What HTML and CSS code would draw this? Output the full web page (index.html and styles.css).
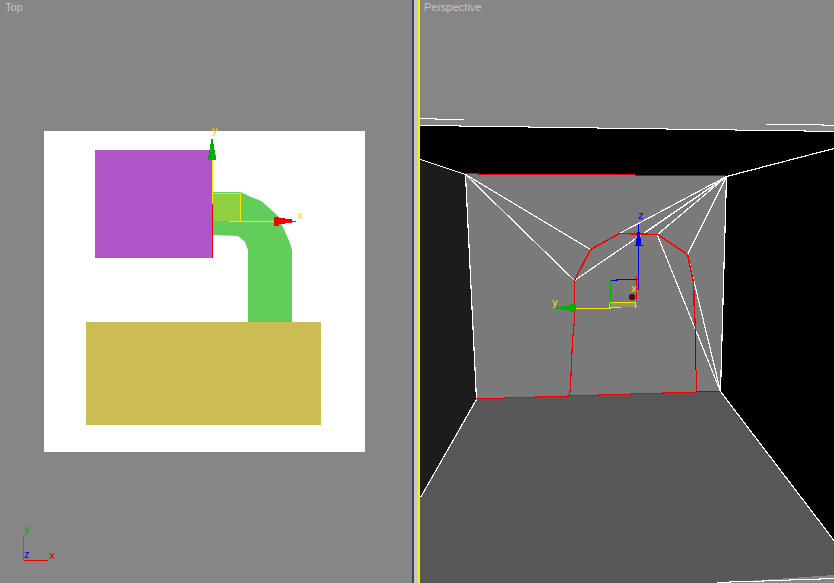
FILE: index.html
```html
<!DOCTYPE html>
<html lang="en">
<head>
<meta charset="utf-8">
<title>Viewports</title>
<link rel="stylesheet" href="styles.css">
</head>
<body>
<main class="workspace">
  <section class="viewport viewport-top">
    <svg class="canvas" viewBox="0 0 412 583" width="412" height="583">
      <text class="label" x="5" y="11">Top</text>
      <rect class="sheet" x="44" y="131" width="321" height="321"/>
      <path class="smooth pipe" d="M212 192H240L262 201.500 278 216 290 243 292 250V322H248V250L245 242 238 236 212 235Z"/>
      <rect class="smooth plane" x="212" y="193" width="28" height="28"/>
      <rect class="purple" x="95" y="150" width="117" height="108"/>
      <rect class="gold" x="86" y="322" width="235" height="103"/>
      <path class="ln yellow" d="M212 193.500H240.500V221M229 221.500H275M212.500 160V204"/>
      <path class="ln red" d="M212.500 204V258"/>
      <path class="fill-red" d="M274 217H279V218H285V219H292V220.500H296V222H292V223H285V224H279V225.500H274Z"/>
      <path class="fill-green" d="M211 139H213V144H214V150H215V155H216V160H208V155H209V150H210V144H211Z"/>
      <text class="axis yellow-text" x="212" y="134">y</text>
      <text class="axis yellow-text" x="297" y="219">x</text>
      <path class="ln red" d="M24 560.500H48"/>
      <path class="ln green-line" d="M23.500 536V560"/>
      <text class="axis red-text" x="49" y="559">x</text>
      <text class="axis green-text" x="24" y="533">y</text>
      <text class="axis blue-text" x="24" y="558">z</text>
    </svg>
  </section>
  <div class="divider"></div>
  <section class="viewport viewport-persp">
    <svg class="canvas" viewBox="420 0 414 583" width="414" height="583">
      <text class="label" x="424" y="11">Perspective</text>
      <path class="room-black" d="M420 125L834 132V148L726 176 465 174 420 159Z"/>
      <path class="room-black" d="M726 176L834 148V540L720 391Z"/>
      <path class="room-left" d="M420 159L465 174 476 399 420 497Z"/>
      <path class="room-back" d="M465 174L726 176 720 391 476 399Z"/>
      <path class="room-floor" d="M476 399L720 391 834 540V575L717 583H420V497Z"/>
      <path class="ln white" d="M420 118.500H436V119.500H464"/>
      <path class="ln white" d="M766 124.500H823V125.500H834"/>
      <path class="ln white" d="M420 125.500H460V126.500H529V127.500H598V128.500H667V129.500H736V130.500H805V131.500H834"/>
      <path class="ln white" d="M420.500 159.500L465.500 174.500M726.500 176.500L834 148.500M476.500 399.500L420.500 497.500M720.500 391.500L834 540.500"/>
      <path class="ln white" d="M717 582.500H730V581.500H763V580.500H790V579.500H820V578.500H834"/>
      <path class="ln white wall-edge" d="M465.500 174.500L476.500 399.500M726.500 176.500L720.500 391.500"/>
      <path class="ln white" d="M465.500 174.500L574.500 280.500M465.500 174.500L590.500 249.500M726.500 176.500L574.500 280.500M726.500 176.500L619.500 233.500M726.500 176.500L642.500 234.500M726.500 176.500L657.500 234.500M726.500 176.500L687.500 254.500M657.500 235.500L720.500 391.500M687.500 254.500L720.500 391.500"/>
      <path class="ln red" d="M465 173.500H478V174.500H635"/>
      <path class="ln dark-red" d="M635 175.500H726"/>
      <path class="ln red thick" d="M574.500 280.500L590.500 249.500 619.500 233.500 657.500 234.500 687.500 254.500 693.500 282.500 694.500 313.500 695.500 330.500"/>
      <path class="ln red" d="M574.500 280V320L572.500 340 570.500 387 569.500 396"/>
      <path class="ln red" d="M696.500 370V392"/>
      <path class="ln dark-line" d="M695.500 330V370"/>
      <path class="ln red" d="M476 398.500H505V397.500H536V396.500H568V395.500H599V394.500H631V393.500H663V392.500H696"/>
      <path class="ln dark-red" d="M696 391.500H720"/>
      <path class="olive" d="M610 303H635L638 307H610Z"/>
      <path class="ln blue" d="M638.500 240V290M611 280.500H617V279.500H638"/>
      <path class="ln green-line" d="M610.500 280V307"/>
      <path class="ln yellow" d="M576 308.500H610V307.500H621M609.500 303V307M610 302.500H635M635.500 302V308"/>
      <path class="ln red" d="M636.500 276V300"/>
      <circle class="dot" cx="632" cy="297" r="3"/>
      <path class="fill-blue" d="M638 224H639V232H640V238H641V245H643V246H635V245H636V238H637V232H638Z"/>
      <path class="fill-green" d="M555 307H562V306H570V304H576V312H570V310H562V309H555Z"/>
      <text class="axis blue-text" x="638" y="219">z</text>
      <text class="axis yellow-text" x="631" y="292">x</text>
      <text class="axis yellow-text" x="552" y="306">y</text>
    </svg>
  </section>
</main>
</body>
</html>
```
FILE: styles.css
```css
html, body {
  margin: 0;
  padding: 0;
  height: 100%;
  overflow: hidden;
  background: #868686;
}
.workspace {
  display: flex;
  width: 834px;
  height: 583px;
}
.viewport {
  height: 583px;
  background: #868686;
}
.viewport-top { width: 412px; flex: none; }
.viewport-persp { flex: 1; min-width: 0; }
.divider {
  width: 8px;
  flex: none;
  box-sizing: border-box;
  background: #c8c8c8;
  border-left: 2px solid #3c4658;
  border-right: 2px solid #fff000;
}
.canvas { display: block; shape-rendering: crispEdges; }
.smooth { shape-rendering: geometricPrecision; }
.label {
  font-family: "Liberation Sans", Arial, sans-serif;
  font-size: 11px;
  fill: #c4c4c4;
}
.axis {
  font-family: "DejaVu Sans", sans-serif;
  font-size: 10px;
  font-weight: 400;
}
.sheet { fill: #fff; }
.pipe { fill: #62cd58; }
.plane { fill: #8ed040; }
.purple { fill: #b055c8; }
.gold { fill: #cbbd54; }
.ln { fill: none; stroke-width: 1.2; }
.thick { stroke-width: 1.5; }
.yellow { stroke: #f5e600; }
.red { stroke: #f00000; }
.dark-red { stroke: #b00000; }
.dark-line { stroke: #501818; }
.green-line { stroke: #00b000; }
.blue { stroke: #0000e0; }
.white { stroke: #fff; }
.fill-red { fill: #f00000; }
.fill-green { fill: #00b000; }
.fill-blue { fill: #0000e0; }
.yellow-text { fill: #f0e000; }
.red-text { fill: #e00000; }
.green-text { fill: #00b000; }
.blue-text { fill: #0000e0; }
.room-black { fill: #000; }
.room-left { fill: #1c1c1c; }
.room-back { fill: #7a7a7a; }
.room-floor { fill: #575757; }
.olive { fill: #9a9560; }
.dot { fill: #5a0a0a; }
```
